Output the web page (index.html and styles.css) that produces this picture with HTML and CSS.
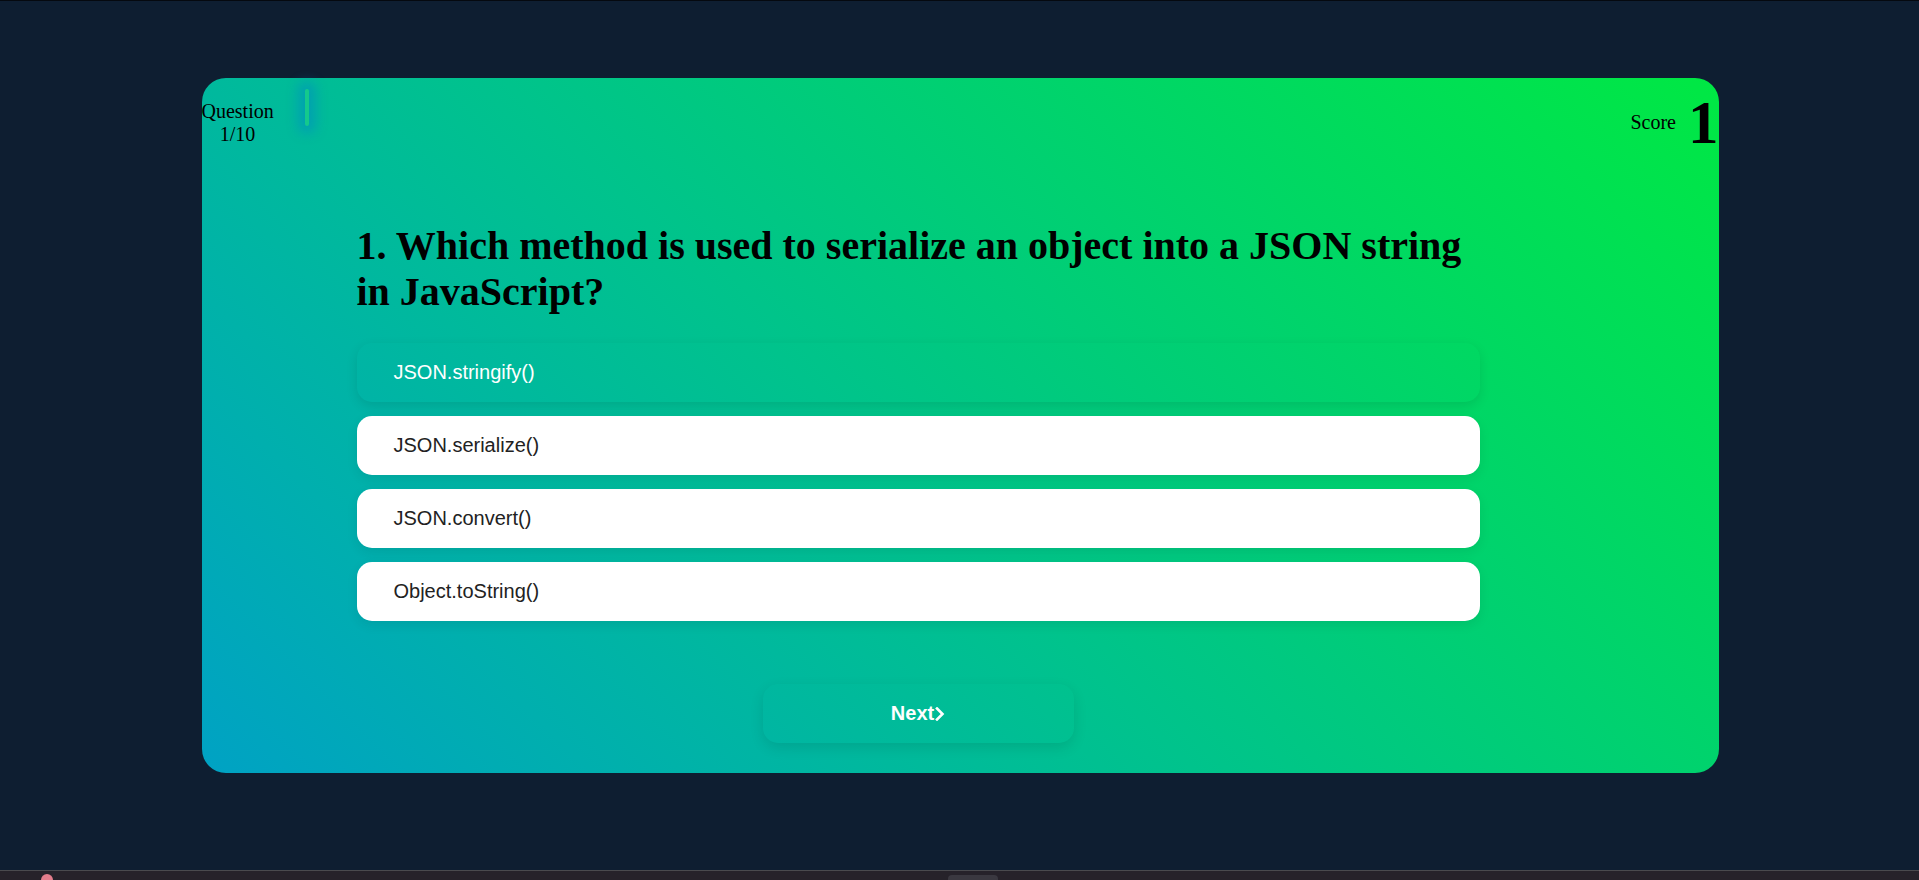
FILE: index.html
```html
<!DOCTYPE html>
<html lang="en">
<head>
<meta charset="utf-8">
<title>Quiz</title>
<link rel="stylesheet" href="styles.css">
</head>
<body>
<div class="topline"></div>
<main class="stage">
  <section class="card">
    <header class="card-head">
      <div class="progress-label">Question 1/10</div>
      <div class="timer-glow"></div>
      <div class="spacer"></div>
      <div class="score">
        <span class="score-label">Score</span>
        <span class="score-value">1</span>
      </div>
    </header>
    <div class="content">
      <h2 class="question">1. Which method is used to serialize an object into a JSON string in JavaScript?</h2>
      <ul class="options">
        <li class="option selected">JSON.stringify()</li>
        <li class="option">JSON.serialize()</li>
        <li class="option">JSON.convert()</li>
        <li class="option">Object.toString()</li>
      </ul>
      <button class="next-btn">Next<svg class="chev" viewBox="0 0 10 14" width="10" height="14"><path d="M2 1.5 L7.5 7 L2 12.5" fill="none" stroke="#fff" stroke-width="2.6" stroke-linecap="square"/></svg></button>
    </div>
  </section>
</main>
<footer class="taskbar">
  <span class="tb-icon"></span>
  <span class="tb-center"></span>
</footer>
</body>
</html>
```

FILE: styles.css
```css
html, body {
  margin: 0;
  padding: 0;
}
body {
  background: #0e1e31;
  height: 880px;
  overflow: hidden;
  display: flex;
  flex-direction: column;
  font-family: "Liberation Serif", "Times New Roman", serif;
}
.topline {
  height: 1px;
  background: #05090f;
}
.stage {
  height: 869px;
  padding: 77px 0 0 1px;
  box-sizing: border-box;
}
.card {
  width: 1517px;
  margin: 0 auto;
  box-sizing: border-box;
  border-radius: 24px;
  background: linear-gradient(45deg, #00a2c4 0%, #00c38c 45%, #00e843 100%);
  padding: 11px 0 30px 0;
}
.card-head {
  display: flex;
  align-items: center;
  height: 67px;
}
.progress-label {
  width: 72px;
  text-align: center;
  font-size: 20px;
  line-height: 23px;
  color: #000;
}
.timer-glow {
  align-self: flex-start;
  width: 4px;
  height: 37px;
  margin-left: 31px;
  background: #14c98c;
  border-radius: 2px;
  box-shadow: 0 0 12px 7px rgba(0, 130, 205, 0.45);
}
.spacer {
  flex: 1;
}
.score {
  display: flex;
  align-items: center;
  gap: 12px;
}
.score-label {
  font-size: 20px;
  color: #000;
}
.score-value {
  font-size: 61px;
  font-weight: bold;
  color: #000;
  line-height: 67px;
}
.content {
  margin-left: 155px;
  width: 1123px;
}
.question {
  margin: 67px 0 0 0;
  font-size: 40px;
  font-weight: bold;
  line-height: 46px;
  color: #000;
}
.options {
  list-style: none;
  margin: 28px 0 0 0;
  padding: 0;
  display: flex;
  flex-direction: column;
  gap: 14px;
}
.option {
  height: 59px;
  box-sizing: border-box;
  display: flex;
  align-items: center;
  padding-left: 37px;
  border-radius: 15px;
  background: #fff;
  color: #222;
  font-family: "Liberation Sans", Arial, sans-serif;
  font-size: 20px;
  box-shadow: 0 4px 12px rgba(0, 0, 0, 0.08);
}
.option.selected {
  background: transparent;
  color: #fff;
  box-shadow: 0 4px 12px rgba(0, 0, 0, 0.1);
}
.next-btn {
  display: flex;
  align-items: center;
  justify-content: center;
  margin: 63px auto 0 auto;
  width: 311px;
  height: 59px;
  border: none;
  border-radius: 15px;
  background: transparent;
  color: #fff;
  font-family: "Liberation Sans", Arial, sans-serif;
  font-weight: bold;
  font-size: 20px;
  box-shadow: 0 5px 14px rgba(0, 0, 0, 0.1);
  padding: 0;
}
.chev {
  margin-left: 1px;
}
.taskbar {
  height: 10px;
  border-top: 1px solid #4a4a4e;
  background: #26222a;
  position: relative;
  box-sizing: border-box;
}
.tb-icon {
  position: absolute;
  left: 41px;
  top: 3px;
  width: 12px;
  height: 12px;
  border-radius: 50%;
  background: #e37d8c;
}
.tb-center {
  position: absolute;
  left: 948px;
  top: 4px;
  width: 50px;
  height: 10px;
  border-radius: 4px;
  background: #3a3840;
}
```
